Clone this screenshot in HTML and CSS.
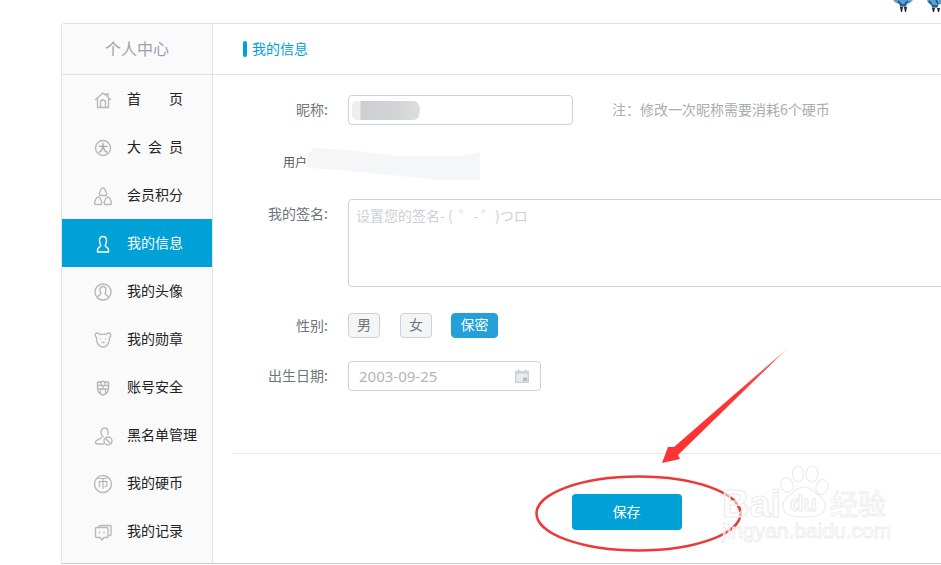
FILE: index.html
```html
<!doctype html>
<html lang="zh-CN">
<head>
    <meta charset="UTF-8">
    <title>个人中心</title>
    <link rel="stylesheet" href="styles.css">
</head>
<body>
    <div class="page">
        <!-- 顶部残留的小人 -->
        <div class="topbar">
            <svg class="sprite" viewBox="0 0 20 12"><path d="M0 0h20l-3 3-3 1-1 3H7L6 4 3 3z" fill="#5f9ecb"/><path d="M5 1l3 3M15 1l-3 3M7 5h6" stroke="#14507f" stroke-width="1.500" fill="none"/><path d="M7 7l1 5h1l1-5zM11 7l1 5h1l1-5z" fill="#1a2430"/></svg>
            <svg class="sprite sprite-cut" viewBox="0 0 14 12"><path d="M0 0h14v4l-3 1-1 3H5L4 4 1 3z" fill="#5f9ecb"/><path d="M2 1l3 4M9 0l2 4M5 6h6" stroke="#14507f" stroke-width="1.500" fill="none"/><path d="M5 8l1 4h1l1-4zM10 8l1 4h1l1-4z" fill="#1a2430"/></svg>
        </div>

        <div class="panel">
            <div class="side">
                <div class="side-title">个人中心</div>
                <a class="nav-item">
                    <svg class="nav-icon" viewBox="0 0 22 22"><path d="M3 11l8-7 3 2.500V5h2v3.200L19 11M5.500 9.500v9h11v-9M8.500 18.500v-5a2.500 2.500 0 0 1 5 0v5"/></svg>
                    <span class="spread">首 页</span>
                </a>
                <a class="nav-item">
                    <svg class="nav-icon" viewBox="0 0 22 22"><circle cx="11" cy="11" r="7.500"/><text class="icon-char" x="11" y="14.500">大</text></svg>
                    <span class="spread">大 会 员</span>
                </a>
                <a class="nav-item">
                    <svg class="nav-icon" viewBox="0 0 22 22"><path d="M11 3c1 0 1.500.5 2 1.500l1.500 3.500c.4 1-.2 2.500-1.200 2.500H8.700c-1 0-1.600-1.500-1.200-2.500L9 4.500C9.500 3.500 10 3 11 3z"/><path d="M6.200 12c1 0 1.500.5 2 1.500l1.500 3.500c.4 1-.2 2.500-1.200 2.500H3.900c-1 0-1.600-1.500-1.200-2.500l1.500-3.500c.5-1 1-1.500 2-1.500z"/><path d="M15.800 12c1 0 1.500.5 2 1.500l1.500 3.500c.4 1-.2 2.500-1.200 2.500h-4.600c-1 0-1.600-1.500-1.200-2.500l1.500-3.500c.5-1 1-1.500 2-1.500z"/></svg>
                    <span>会员积分</span>
                </a>
                <a class="nav-item active">
                    <svg class="nav-icon" viewBox="0 0 22 22"><path d="M11 3.500c2.300 0 3.500 1.500 3.500 4 0 2-.5 3.500-1.300 5 .5 1.500 3.300 2.500 3.300 4v2.500H5.500V16.500c0-1.500 2.800-2.500 3.300-4-.8-1.500-1.300-3-1.300-5 0-2.500 1.200-4 3.500-4z"/></svg>
                    <span>我的信息</span>
                </a>
                <a class="nav-item">
                    <svg class="nav-icon" viewBox="0 0 22 22"><circle cx="11" cy="11" r="8"/><path d="M11 5.500c2 0 3 1.400 3 3.500 0 1.500-.5 2.500-1 3.500.5 1.300 2.500 2 3.500 3.300M11 5.500c-2 0-3 1.400-3 3.500 0 1.500.5 2.500 1 3.500-.5 1.300-2.500 2-3.500 3.300"/></svg>
                    <span>我的头像</span>
                </a>
                <a class="nav-item">
                    <svg class="nav-icon" viewBox="0 0 22 22"><path d="M5 4c1.500 0 2.500.7 3 1.500 1.800-.5 4.200-.5 6 0 .5-.8 1.500-1.500 3-1.500 2 0 2.500 3 .5 4.500.5 4.500-2 9.500-6.500 9.500S4 13 4.500 8.500C2.500 7 3 4 5 4z"/><path d="M8 10h.8M13.200 10h.8M9.500 13c.6.7 2.400.7 3 0"/></svg>
                    <span>我的勋章</span>
                </a>
                <a class="nav-item">
                    <svg class="nav-icon" viewBox="0 0 22 22"><path d="M11 4.500c2 0 4 .5 5.500 1v6c0 3-2.500 5.500-5.500 6.500-3-1-5.500-3.500-5.500-6.500v-6c1.500-.5 3.500-1 5.500-1zM5.500 8.500h11M5.500 12h11M9 4.800v3.700M13 4.800v3.700M11 8.500V12M8.500 12v4M13.500 12v4"/></svg>
                    <span>账号安全</span>
                </a>
                <a class="nav-item">
                    <svg class="nav-icon" viewBox="0 0 22 22"><path d="M11.500 12.500c-1.500-1-2.500-2.800-2.500-5 0-2.500 1.300-4.500 3.500-4.500 2.300 0 3.500 2 3.500 4.500 0 .7-.1 1.500-.4 2.200M9.500 12.500c-.5 1.300-6 2.500-6 4.500 0 1.500.8 2 2 2h6.500"/><circle cx="16" cy="16" r="4"/><path d="M13.500 13.500l5 5"/></svg>
                    <span>黑名单管理</span>
                </a>
                <a class="nav-item">
                    <svg class="nav-icon" viewBox="0 0 22 22"><circle cx="11" cy="11" r="8.500"/><text class="icon-char icon-char-big" x="11" y="15">币</text></svg>
                    <span>我的硬币</span>
                </a>
                <a class="nav-item">
                    <svg class="nav-icon" viewBox="0 0 22 22"><path d="M7 6.500V5.500c0-.6.5-1 1-1h10c.6 0 1 .4 1 1v8c0 .6-.4 1-1 1h-1.500"/><path d="M4.500 6.500h10.500c.6 0 1 .4 1 1v8c0 .6-.4 1-1 1h-3l-2 2.500-2-2.500H4.500c-.6 0-1-.4-1-1v-8c0-.6.4-1 1-1zM7.500 10.500v2M12 10.500v2"/></svg>
                    <span>我的记录</span>
                </a>
            </div>

            <div class="main">
                <div class="main-head"><span class="head-mark"></span><span class="head-text">我的信息</span></div>

                <div class="form">
                    <div class="row">
                        <label class="row-label">昵称:</label>
                        <div class="field field-nick"></div>
                        <span class="note">注：修改一次昵称需要消耗6个硬币</span>
                    </div>
                    <div class="row">
                        <label class="row-label row-label-user">用户</label>
                    </div>
                    <div class="row row-top">
                        <label class="row-label row-label-top">我的签名:</label>
                        <div class="field field-sign">设置您的签名- (&nbsp;&nbsp;゜-&nbsp;゜)つロ</div>
                    </div>
                    <div class="row row-gender">
                        <label class="row-label">性别:</label>
                        <div class="gender">
                            <span class="gender-btn">男</span>
                            <span class="gender-btn">女</span>
                            <span class="gender-btn on">保密</span>
                        </div>
                    </div>
                    <div class="row row-date">
                        <label class="row-label">出生日期:</label>
                        <div class="field field-date">
                            <span>2003-09-25</span>
                            <svg class="date-icon" viewBox="0 0 14 14"><path d="M0 2h2.500V0.500h2V2h5V0.500h2V2H14v12H0z" fill="#ccd0d7"/><path d="M1.500 4.500h11v8h-11z" fill="#e8eaee"/><path d="M8 8.500h4V12H8z" fill="#b4bac4"/></svg>
                        </div>
                    </div>
                </div>

                <div class="footer">
                    <a class="save-btn">保存</a>
                </div>
            </div>
        </div>

        <!-- 截图上的标注：打码、箭头、圈、水印 -->
        <svg class="marks" width="941" height="565" viewBox="0 0 941 565">
            <defs>
                <linearGradient id="nickBlur" x1="0" x2="1" y1="0" y2="0">
                    <stop offset="0" stop-color="#eeeeef"/>
                    <stop offset="0.12" stop-color="#eeeeef"/>
                    <stop offset="0.13" stop-color="#cdced2"/>
                    <stop offset="0.7" stop-color="#d3d5d7"/>
                    <stop offset="1" stop-color="#dcdedf"/>
                </linearGradient>
                <linearGradient id="arrowFade" x1="788" y1="348" x2="662" y2="463" gradientUnits="userSpaceOnUse">
                    <stop offset="0" stop-color="#ffc4c4"/>
                    <stop offset="0.12" stop-color="#f55"/>
                    <stop offset="0.4" stop-color="#f33"/>
                </linearGradient>
            </defs>
            <path d="M352 106a5 5 0 0 1 5-5h57a6 9.500 0 0 1 0 19h-57a5 5 0 0 1-5-5z" fill="url(#nickBlur)"/>
            <path d="M307 154l8-6 35 2 50 6 60 0 20-4v28h-40l-40-4-60-6-33-2z" fill="#f5f6f7"/>
            <path d="M788 348L674 447 668 447 662 463 680 459 678 455z" fill="url(#arrowFade)"/>
            <ellipse cx="638.500" cy="513.500" rx="102" ry="37" fill="none" stroke="#ee3838" stroke-width="2.500"/>
            <g class="watermark">
                <text class="wm-big" x="722" y="517">Bai</text>
                <text class="wm-cn" x="830" y="515">经验</text>
                <text class="wm-url" x="722" y="538">jingyan.baidu.com</text>
                <path d="M804 487c6 0 9 4 13 7 6 4 9 8 8 14-1 6-6 9-21 9s-20-3-21-9c-1-6 2-10 8-14 4-3 7-7 13-7z"/>
                <ellipse cx="787" cy="485" rx="6" ry="7.500" transform="rotate(-25 787 485)"/>
                <ellipse cx="798" cy="474" rx="5.500" ry="8"/>
                <ellipse cx="812" cy="474" rx="6" ry="8"/>
                <ellipse cx="822" cy="487" rx="6" ry="7.500" transform="rotate(25 822 487)"/>
                <text class="wm-du" x="790" y="511">du</text>
            </g>
        </svg>
    </div>
</body>
</html>
```

FILE: styles.css
```css
*{padding: 0;margin: 0;box-sizing: border-box}
html,body{
    height: 100%;
    overflow: hidden;
    background-color: #fff;
}
body{
    font-family: "Noto Sans CJK SC", "Noto Sans", sans-serif;
    font-size: 14px;
    color: #222;
}
.page{
    position: relative;
    width: 941px;
    height: 565px;
    overflow: hidden;
}
.topbar{
    display: flex;
    justify-content: flex-end;
    gap: 14px;
    height: 23px;
    align-items: flex-start;
}
.sprite{
    width: 20px;
    height: 12px;
}
.sprite-cut{
    width: 14px;
}
.panel{
    display: flex;
    width: 980px;
    height: 541px;
    margin-left: 61px;
    background-color: #fff;
    border: 1px solid #e1e2e5;
    border-bottom-color: #ccc;
    border-radius: 4px 0 0 0;
}

/* 左侧菜单 */
.side{
    width: 151px;
    flex: none;
    background-color: #fafafa;
    border-right: 1px solid #e1e2e5;
}
.side-title{
    height: 51px;
    line-height: 48px;
    text-align: center;
    font-size: 16px;
    color: #99a2aa;
    border-bottom: 1px solid #e1e2e5;
}
.nav-item{
    display: flex;
    align-items: center;
    gap: 13px;
    height: 48px;
    padding-left: 30px;
    line-height: 20px;
    color: #222;
}
.nav-item span{
    margin-bottom: 2px;
}
.nav-item.active{
    width: 150px;
    background-color: #00a1d6;
    color: #fff;
}
.nav-icon{
    width: 22px;
    height: 22px;
    flex: none;
    margin-top: 2px;
    fill: none;
    stroke: #b8b8b8;
    stroke-width: 1.400;
}
.active .nav-icon{
    stroke: #fff;
}
.icon-char{
    font-size: 10px;
    font-weight: bold;
    text-anchor: middle;
    fill: #aaa;
    stroke: none;
}
.icon-char-big{
    font-size: 12px;
    font-weight: normal;
}
.spread{
    width: 56px;
    text-align: justify;
    text-align-last: justify;
}

/* 右侧内容 */
.main{
    flex: 1;
    min-width: 0;
}
.main-head{
    display: flex;
    align-items: center;
    height: 51px;
    padding-left: 30px;
    color: #00a1d6;
    border-bottom: 1px solid #e1e2e5;
}
.head-mark{
    width: 4px;
    height: 16px;
    margin-right: 5px;
    border-radius: 2px;
    background-color: #00a1d6;
}
.head-text{
    margin-bottom: 2px;
}
.form{
    display: flex;
    flex-direction: column;
    gap: 22px;
    height: 378px;
    padding-top: 20px;
}
.row{
    display: flex;
    align-items: center;
    min-height: 30px;
}
.row-top{
    align-items: flex-start;
}
.row-gender{
    margin-top: 2px;
}
.row-date{
    margin-top: -2px;
}
.row-label{
    width: 115px;
    margin-right: 20px;
    margin-bottom: 2px;
    flex: none;
    text-align: right;
    color: #6d757a;
    line-height: 28px;
}
.row-label-top{
    margin-bottom: 0;
}
.row-label-user{
    width: 94px;
    margin-right: 41px;
    margin-bottom: 0;
    font-size: 12px;
    color: #555;
}
.field{
    border: 1px solid #c8d2e0;
    border-radius: 4px;
    background-color: #fff;
}
.field-nick{
    width: 225px;
    height: 30px;
}
.note{
    margin-left: 39px;
    margin-bottom: 2px;
    color: #a9adb0;
}
.field-sign{
    width: 640px;
    height: 88px;
    padding: 5px 7px;
    color: #ccd0d7;
}
.field-date{
    display: flex;
    align-items: center;
    justify-content: space-between;
    width: 193px;
    height: 30px;
    padding: 0 11px 0 10px;
    font-family: "Noto Sans", sans-serif;
    font-size: 15px;
    color: #b4b4b4;
}
.date-icon{
    width: 14px;
    height: 14px;
}
.gender{
    display: flex;
    gap: 20px;
    margin-bottom: 1px;
}
.gender-btn{
    height: 25px;
    padding: 0 8px;
    line-height: 21px;
    border: 1px solid #c8d2e0;
    border-radius: 4px;
    background-color: #f4f5f7;
    color: #6d757a;
}
.gender-btn.on{
    width: 47px;
    margin-left: -1px;
    padding: 0;
    text-align: center;
    background-color: #23a0d8;
    border-color: #23a0d8;
    color: #fff;
}
.footer{
    display: flex;
    justify-content: center;
    margin: 0 19px;
    padding-top: 40px;
    border-top: 1px solid #e5e9ef;
}
.save-btn{
    width: 110px;
    height: 36px;
    line-height: 34px;
    text-align: center;
    border-radius: 4px;
    background-color: #00a1d6;
    color: #fff;
}

/* 标注层 */
.marks{
    position: absolute;
    left: 0;
    top: 0;
    pointer-events: none;
}
.watermark{
    font-family: "Liberation Sans", sans-serif;
    fill: rgba(255,255,255,.55);
    stroke: #ececec;
    stroke-width: 1.200;
}
.wm-big{
    font-size: 38px;
    font-weight: bold;
}
.wm-du{
    font-size: 22px;
    font-weight: bold;
}
.wm-cn{
    font-family: "Noto Sans CJK SC", sans-serif;
    font-size: 28px;
    stroke-width: .8;
}
.wm-url{
    font-size: 21px;
    stroke-width: .8;
}
```
